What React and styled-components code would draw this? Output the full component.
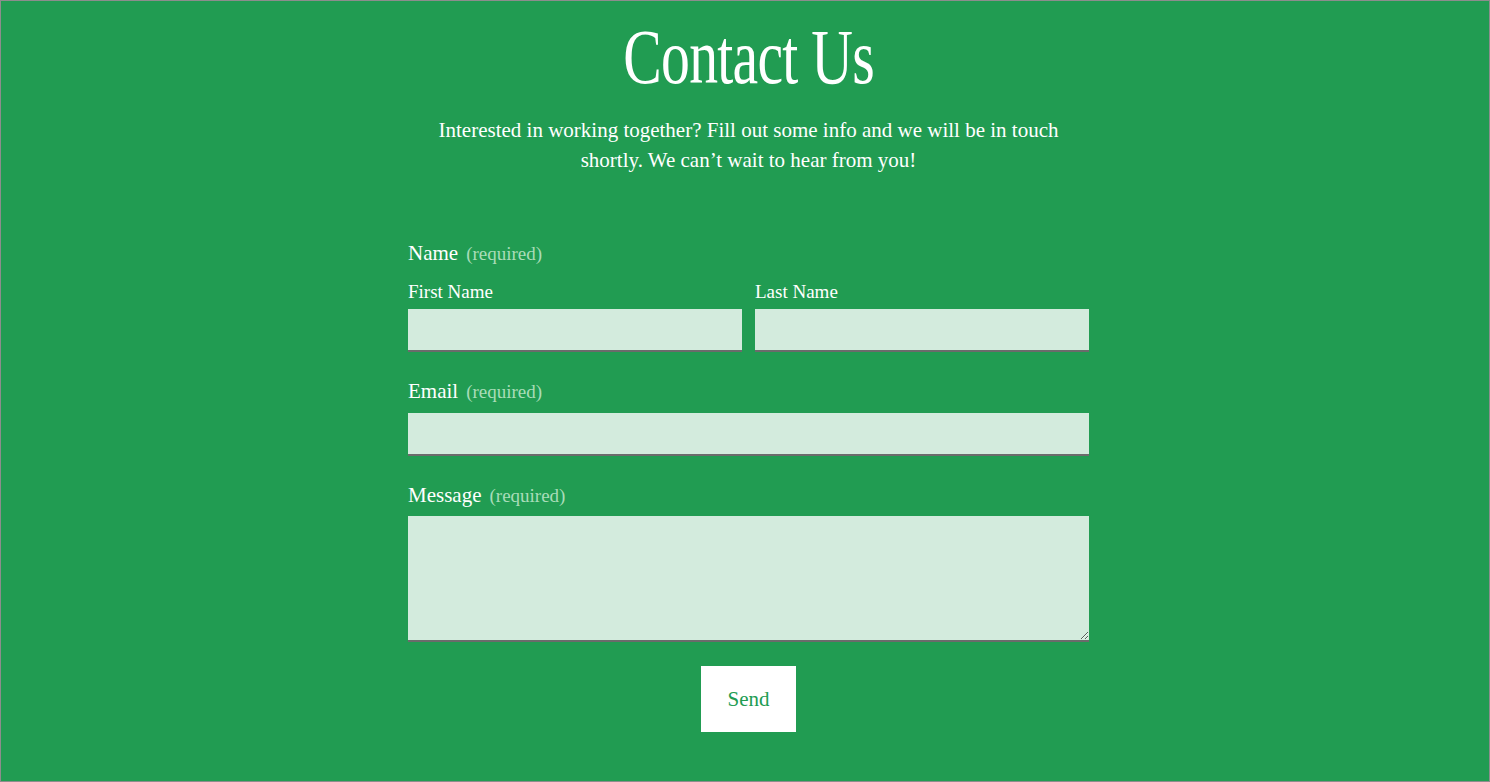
import React from 'react';
import styled, { createGlobalStyle } from 'styled-components';

const GlobalStyle = createGlobalStyle`
  html, body {
    margin: 0;
    padding: 0;
  }
  body {
    font-family: 'Liberation Serif', 'DejaVu Serif', serif;
    background: #219c52;
  }
  * {
    box-sizing: border-box;
  }
`;

export default function App() {
  return (
    <>
      <GlobalStyle />
      <Page>
        <Title>
          <TitleText>Contact Us</TitleText>
        </Title>
        <Intro>
          Interested in working together? Fill out some info and we will be in touch
          <br />
          shortly. We can’t wait to hear from you!
        </Intro>
        <Form onSubmit={e => e.preventDefault()}>
          <Label>
            Name<Required>(required)</Required>
          </Label>
          <NameRow>
            <Field>
              <SubLabel>First Name</SubLabel>
              <Input type="text" />
            </Field>
            <Field>
              <SubLabel>Last Name</SubLabel>
              <Input type="text" />
            </Field>
          </NameRow>

          <Label top={27}>
            Email<Required>(required)</Required>
          </Label>
          <Input type="email" gap={9} />

          <Label top={27}>
            Message<Required>(required)</Required>
          </Label>
          <TextArea gap={8} />

          <SendButton type="submit">Send</SendButton>
        </Form>
      </Page>
    </>
  );
}

const Page = styled.main`
  display: flex;
  flex-direction: column;
  align-items: center;
  min-height: 100vh;
  padding: 14px 0 0 7px;
  border: 1px solid #8d8d8d;
  background: #219c52;
  color: #ffffff;
`;

const Title = styled.h1`
  margin: 0;
  height: 83px;
  font-size: 79px;
  font-weight: 400;
  line-height: 83px;
  text-align: center;
`;

const TitleText = styled.span`
  display: inline-block;
  transform: scaleX(0.73);
  letter-spacing: -1px;
`;

const Intro = styled.p`
  margin: 17px 0 0;
  font-size: 21px;
  line-height: 30px;
  text-align: center;
`;

const Form = styled.form`
  display: flex;
  flex-direction: column;
  width: 681px;
  margin-top: 66px;
`;

const Label = styled.div`
  margin-top: ${({ top }) => top || 0}px;
  font-size: 21px;
  line-height: 24px;
`;

const Required = styled.span`
  margin-left: 8px;
  font-size: 19px;
  color: #a9dcb9;
`;

const NameRow = styled.div`
  display: grid;
  grid-template-columns: 1fr 1fr;
  gap: 13px;
  margin-top: 15px;
`;

const Field = styled.label`
  display: flex;
  flex-direction: column;
  gap: 6px;
`;

const SubLabel = styled.span`
  font-size: 19px;
  line-height: 22px;
`;

const Input = styled.input`
  width: 100%;
  height: 43px;
  margin-top: ${({ gap }) => gap || 0}px;
  padding: 0 12px;
  border: none;
  border-bottom: 2px solid #6b6b6b;
  border-radius: 0;
  background: #d3ebdd;
  font-family: inherit;
  font-size: 18px;
  outline: none;
`;

const TextArea = styled.textarea`
  width: 100%;
  height: 126px;
  margin-top: ${({ gap }) => gap || 0}px;
  padding: 10px 12px;
  border: none;
  border-bottom: 2px solid #6b6b6b;
  border-radius: 0;
  background: #d3ebdd;
  font-family: inherit;
  font-size: 18px;
  resize: vertical;
  outline: none;
`;

const SendButton = styled.button`
  align-self: center;
  width: 95px;
  height: 66px;
  margin-top: 24px;
  border: none;
  border-radius: 0;
  background: #ffffff;
  color: #219c52;
  font-family: inherit;
  font-size: 21px;
  cursor: pointer;
`;
